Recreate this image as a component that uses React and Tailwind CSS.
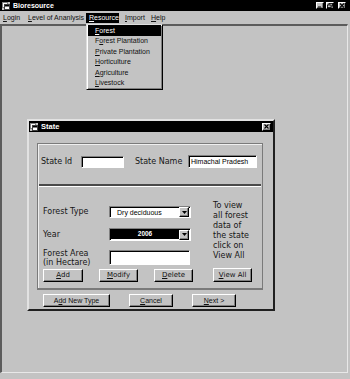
import React from "react";

const raised =
  "bg-[#c3c3c3] border border-t-white border-l-white border-r-black border-b-black shadow-[inset_-1px_-1px_0_#808080]";
const sunken =
  "border border-t-[#808080] border-l-[#808080] border-r-white border-b-white shadow-[inset_1px_1px_0_#000]";

const WinIcon = () => (
  <svg width="8" height="8" viewBox="0 0 8 8">
    <rect x="0" y="0" width="8" height="8" fill="#c3c3c3" />
    <rect x="0.5" y="0.5" width="5" height="5" fill="#fff" stroke="#808080" strokeWidth="1" />
    <rect x="2.5" y="2.5" width="5" height="5" fill="#fff" stroke="#404040" strokeWidth="1" />
    <rect x="3" y="3" width="4" height="1.5" fill="#000" />
  </svg>
);

const CapBtn = ({ kind, className = "" }) => (
  <div className={`w-[8px] h-[7px] flex items-center justify-center ${raised} ${className}`}>
    <svg width="6" height="5" viewBox="0 0 6 5">
      {kind === "min" && <rect x="1" y="3.5" width="3" height="1" fill="#000" />}
      {kind === "max" && (
        <g fill="none" stroke="#000" strokeWidth="0.8">
          <rect x="2" y="0.5" width="3.5" height="2.5" />
          <rect x="0.5" y="2" width="3.5" height="2.6" fill="#c3c3c3" />
        </g>
      )}
      {kind === "close" && (
        <path d="M1 0.5 L5 4.5 M5 0.5 L1 4.5" stroke="#000" strokeWidth="1.1" />
      )}
    </svg>
  </div>
);

const Btn = ({ w, className = "", children }) => (
  <div
    className={`h-[13px] flex items-center justify-center text-[7px] leading-none text-[#111] ${raised} ${w} ${className}`}
  >
    {children}
  </div>
);

const Arrow = () => (
  <div className={`w-[10px] h-[10px] flex items-center justify-center ${raised}`}>
    <svg width="5" height="3" viewBox="0 0 5 3">
      <path d="M0 0 H5 L2.5 3 Z" fill="#000" />
    </svg>
  </div>
);

const menuItems = [
  { u: "F", rest: "orest", active: true },
  { pre: "F", u: "o", rest: "rest Plantation" },
  { u: "P", rest: "rivate Plantation" },
  { u: "H", rest: "orticulture" },
  { u: "A", rest: "griculture" },
  { u: "L", rest: "ivestock" },
];

export default function App() {
  return (
    <div className="relative w-[350px] h-[379px] bg-[#c3c3c3] overflow-hidden font-['Liberation_Sans',Arial,sans-serif] text-black">
      {/* title bar */}
      <div className="h-[11px] bg-black flex items-center pl-[2px] pr-[4px]">
        <WinIcon />
        <span className="ml-[3px] text-[7px] font-bold text-white leading-none">Bioresource</span>
        <div className="ml-auto flex items-center">
          <CapBtn kind="min" />
          <CapBtn kind="max" className="ml-[2px]" />
          <CapBtn kind="close" className="ml-[4px]" />
        </div>
      </div>

      {/* menu bar */}
      <div className="h-[13px] flex items-center text-[7px] leading-none text-[#111]">
        <div className="w-[25px] pl-[3px]">
          <u>L</u>ogin
        </div>
        <div className="w-[61px] pl-[3px] whitespace-nowrap">
          <u>L</u>evel of Ananlysis
        </div>
        <div className="w-[33px] h-[10px] pl-[3px] flex items-center bg-black text-white">
          <u>R</u>esource
        </div>
        <div className="w-[32px] pl-[6px]">
          <u>I</u>mport
        </div>
        <div className="pl-[0px]">
          <u>H</u>elp
        </div>
      </div>

      {/* MDI client area */}
      <div className="w-[348px] h-[349px] border-t-2 border-l-2 border-r border-b border-t-[#5c5c5c] border-l-[#5c5c5c] border-r-[#e8e8e8] border-b-[#e8e8e8]" />

      {/* Resource dropdown */}
      <div className="absolute left-[86px] top-[24px] w-[77px] h-[66px] bg-[#c3c3c3] border border-t-[#dfdfdf] border-l-[#dfdfdf] border-r-black border-b-black shadow-[inset_1px_1px_0_#fff,inset_-1px_-1px_0_#808080] px-[1px] flex flex-col text-[7px] leading-none text-[#111]">
        {menuItems.map((m, i) => (
          <div
            key={i}
            className={`h-[10.5px] pl-[7px] flex items-center whitespace-nowrap ${m.active ? "bg-black text-white" : ""}`}
          >
            {m.pre}
            <u>{m.u}</u>
            {m.rest}
          </div>
        ))}
      </div>

      {/* State dialog */}
      <div className="absolute left-[27px] top-[119px] w-[248px] h-[192px] bg-[#c3c3c3] border-2 border-t-[#e2e2e2] border-l-[#e2e2e2] border-r-[#202020] border-b-[#202020] flex flex-col">
        <div className="h-[11px] bg-black flex items-center pl-[1px] pr-[2px]">
          <WinIcon />
          <span className="ml-[3px] text-[7.5px] font-bold text-white leading-none">State</span>
          <div className={`ml-auto w-[9px] h-[8px] flex items-center justify-center ${raised}`}>
            <svg width="5" height="5" viewBox="0 0 5 5">
              <path d="M0.5 0.5 L4.5 4.5 M4.5 0.5 L0.5 4.5" stroke="#000" strokeWidth="1.1" />
            </svg>
          </div>
        </div>

        {/* group box */}
        <div className="ml-[8px] mt-[11px] w-[226px] h-[147px] border border-b-2 border-[#7a7a7a] shadow-[inset_1px_1px_0_#efefef] flex flex-col font-['DejaVu_Sans',Verdana,sans-serif] text-[8px] text-[#161616]">
          <div className="mt-[11px] h-[13px] pl-[3px] flex items-center">
            <span className="w-[40px] leading-none">State Id</span>
            <div className={`w-[43px] h-[12px] bg-white ${sunken}`} />
            <span className="ml-[11px] w-[53px] leading-none">State Name</span>
            <div className={`w-[69px] h-[13px] bg-white flex items-center pl-[2px] ${sunken}`}>
              <span className="font-['Liberation_Sans',Arial,sans-serif] text-[7px] leading-none text-black">
                Himachal Pradesh
              </span>
            </div>
          </div>

          <div className="mt-[16px] mx-[1px] h-[3px] border-t-2 border-b border-t-[#4a4a4a] border-b-white" />

          <div className="flex pl-[5px]">
            <div className="w-[150px] mt-[19px] flex flex-col">
              <div className="h-[12px] flex items-center">
                <span className="w-[66px] leading-none">Forest Type</span>
                <div className={`w-[82px] h-[12px] bg-white flex items-center pr-[1px] ${sunken}`}>
                  <span className="flex-1 pl-[7px] font-['Liberation_Sans',Arial,sans-serif] text-[7px] leading-none text-black">
                    Dry deciduous
                  </span>
                  <Arrow />
                </div>
              </div>
              <div className="mt-[10px] h-[13px] flex items-center">
                <span className="w-[66px] leading-none">Year</span>
                <div className={`w-[82px] h-[13px] bg-white flex items-center p-[1px] ${sunken}`}>
                  <div className="flex-1 h-full bg-black flex items-center justify-center">
                    <span className="font-['Liberation_Sans',Arial,sans-serif] text-[6.5px] font-bold leading-none text-white">
                      2006
                    </span>
                  </div>
                  <Arrow />
                </div>
              </div>
              <div className="mt-[9px] h-[15px] flex items-center">
                <span className="w-[66px] leading-[9px] whitespace-nowrap">
                  Forest Area
                  <br />
                  (in Hectare)
                </span>
                <div className={`w-[81px] h-[15px] bg-white ${sunken}`} />
              </div>
              <div className="mt-[4px] flex">
                <Btn w="w-[40px]">
                  <u>A</u>dd
                </Btn>
                <Btn w="w-[39px]" className="ml-[16px]">
                  <u>M</u>odify
                </Btn>
                <Btn w="w-[39px]" className="ml-[16px]">
                  <u>D</u>elete
                </Btn>
              </div>
            </div>

            <div className="ml-[20px] mt-[14px] flex flex-col">
              <div className="leading-[10px] whitespace-nowrap">
                To view
                <br />
                all forest
                <br />
                data of
                <br />
                the state
                <br />
                click on
                <br />
                View All
              </div>
              <Btn w="w-[39px]" className="mt-[7px] h-[14px]">
                <u>V</u>iew All
              </Btn>
            </div>
          </div>
        </div>

        {/* bottom buttons */}
        <div className="mt-[4px] ml-[14px] flex">
          <Btn w="w-[67px]">
            A<u>d</u>d New Type
          </Btn>
          <Btn w="w-[44px]" className="ml-[19px]">
            <u>C</u>ancel
          </Btn>
          <Btn w="w-[44px]" className="ml-[19px]">
            <u>N</u>ext &gt;
          </Btn>
        </div>
      </div>
    </div>
  );
}
